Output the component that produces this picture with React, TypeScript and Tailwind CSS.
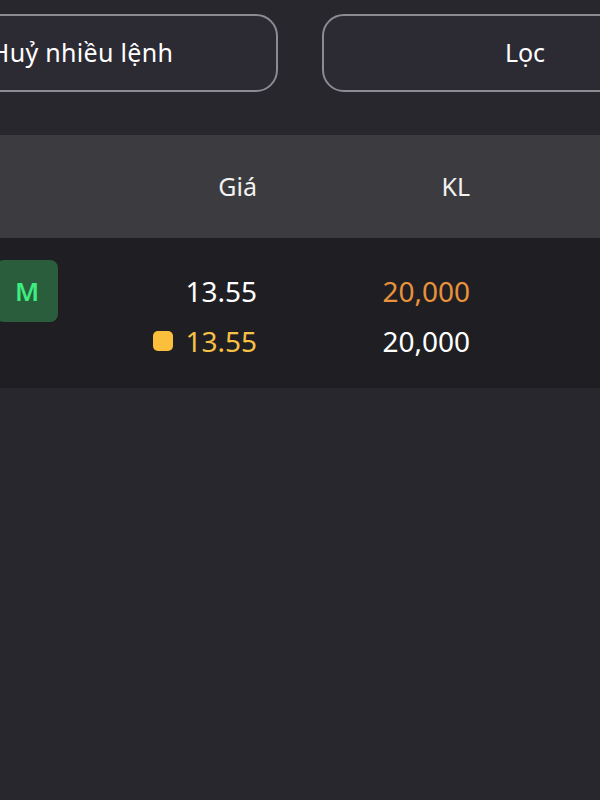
import React from 'react';

const font = { fontFamily: '"Noto Sans", "Open Sans", sans-serif' };

export default function App() {
  return (
    <div
      className="w-[600px] h-[800px] overflow-hidden bg-[#28272d] text-white"
      style={font}
    >
      {/* Action buttons */}
      <div className="flex gap-[44px] ml-[-128px] pt-[14px] pb-[43px]">
        <button className="w-[406px] h-[78px] shrink-0 rounded-[22px] border-2 border-[#8c8b91] bg-[#2c2a33] pl-[14px] text-[25px] tracking-[0.3px] text-white">
          Huỷ nhiều lệnh
        </button>
        <button className="w-[406px] h-[78px] shrink-0 rounded-[22px] border-2 border-[#8c8b91] bg-[#2c2a33] text-[25px] text-white">
          Lọc
        </button>
      </div>

      {/* Table header */}
      <div className="flex h-[103px] items-center bg-[#3c3c40] text-[25px] text-[#f2f2f2]">
        <div className="w-[257px] text-right">Giá</div>
        <div className="w-[213px] text-right">KL</div>
      </div>

      {/* Order row */}
      <div className="flex h-[150px] items-start bg-[#1f1f23]">
        <div className="flex w-[257px] items-start justify-between">
          <div className="ml-[-4px] mt-[22px] flex h-[62px] w-[62px] items-center justify-center rounded-[8px] bg-[#2a5d3b] text-[26px] font-semibold text-[#3ded80]">
            M
          </div>
          <div className="mt-[28px] flex flex-col items-end text-[28px] leading-[50px]">
            <span className="text-white">13.55</span>
            <span className="flex items-center gap-[12px] text-[#f6c145]">
              <span className="h-[20px] w-[20px] rounded-[5px] bg-[#fbbf3b]" />
              13.55
            </span>
          </div>
        </div>
        <div className="mt-[28px] flex w-[213px] flex-col items-end text-[28px] leading-[50px]">
          <span className="text-[#e8923b]">20,000</span>
          <span className="text-white">20,000</span>
        </div>
      </div>
    </div>
  );
}
